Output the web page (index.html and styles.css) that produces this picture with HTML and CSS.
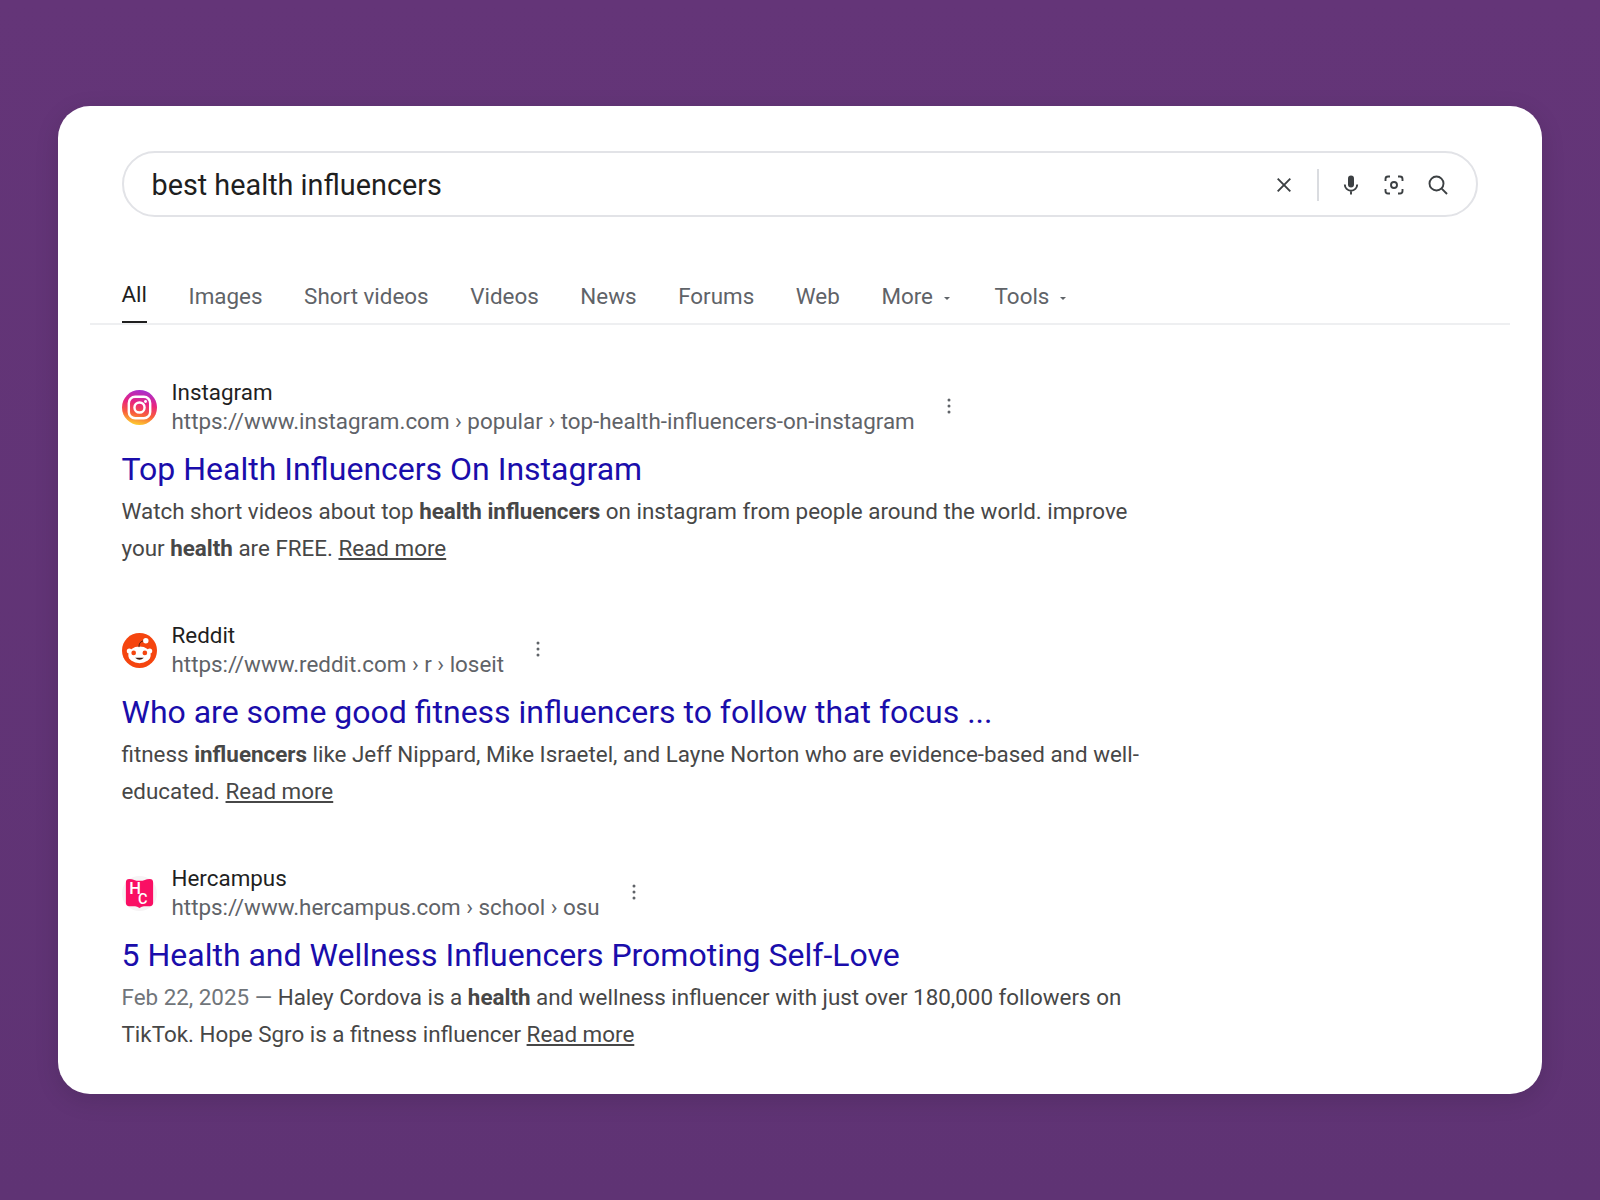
FILE: index.html
```html
<!DOCTYPE html>
<html lang="en">
<head>
  <meta charset="UTF-8" />
  <title>best health influencers</title>
  <link rel="stylesheet" href="styles.css">
</head>
<body>
  <div class="card">
    <div class="search-bar">
      <span class="query">best health influencers</span>
      <svg class="icon icon-clear" viewBox="0 0 24 24"><path d="M5.700 5.700l12.600 12.600M18.300 5.700L5.700 18.300" /></svg>
      <span class="search-divider"></span>
      <svg class="icon icon-mic" viewBox="0 0 24 24">
        <rect class="fill" x="9" y="2.500" width="6" height="12" rx="3" />
        <path d="M5.800 11.500a6.200 6.200 0 0 0 12.400 0M12 17.700v3.800" />
      </svg>
      <svg class="icon icon-lens" viewBox="0 0 24 24">
        <path d="M3.500 8V6a2.500 2.500 0 0 1 2.500-2.500h2M16 3.500h2A2.500 2.500 0 0 1 20.500 6v2M20.500 16v2a2.500 2.500 0 0 1-2.500 2.500h-2M8 20.500H6A2.500 2.500 0 0 1 3.500 18v-2" />
        <circle cx="12" cy="12" r="3" />
      </svg>
      <svg class="icon icon-search" viewBox="0 0 24 24">
        <circle cx="10.500" cy="10.500" r="7" />
        <path d="M15.700 15.700L21 21" />
      </svg>
    </div>

    <div class="tabs">
      <a class="tab active">All</a>
      <a class="tab">Images</a>
      <a class="tab">Short videos</a>
      <a class="tab">Videos</a>
      <a class="tab">News</a>
      <a class="tab">Forums</a>
      <a class="tab">Web</a>
      <a class="tab tab-more">More<span class="caret"></span></a>
      <a class="tab">Tools<span class="caret"></span></a>
    </div>

    <div class="results">
      <div class="result">
        <div class="source">
          <svg class="favicon" viewBox="0 0 36 36">
            <defs>
              <linearGradient id="igGrad" x1="0.4" y1="1" x2="0.6" y2="0">
                <stop offset="0" stop-color="#fdd030" />
                <stop offset="0.3" stop-color="#f9603a" />
                <stop offset="0.62" stop-color="#e9247f" />
                <stop offset="1" stop-color="#a52fd2" />
              </linearGradient>
            </defs>
            <circle cx="18" cy="18" r="18" fill="url(#igGrad)" />
            <rect x="7" y="7" width="22" height="22" rx="6.500" fill="none" stroke="#fff" stroke-width="2.500" />
            <circle cx="18" cy="18" r="5.200" fill="none" stroke="#fff" stroke-width="2.500" />
            <circle cx="24.200" cy="11.800" r="1.500" fill="#fff" />
          </svg>
          <div class="source-text">
            <div class="site-name">Instagram</div>
            <div class="site-url">https://www.instagram.com › popular › top-health-influencers-on-instagram</div>
          </div>
          <svg class="dots" viewBox="0 0 4 16"><circle cx="2" cy="2" r="1.500" /><circle cx="2" cy="8" r="1.500" /><circle cx="2" cy="14" r="1.500" /></svg>
        </div>
        <a class="title">Top Health Influencers On Instagram</a>
        <p class="snippet">Watch short videos about top <b>health influencers</b> on instagram from people around the world. improve your <b>health</b> are FREE. <u>Read more</u></p>
      </div>

      <div class="result">
        <div class="source">
          <svg class="favicon" viewBox="0 0 36 36">
            <circle cx="18" cy="18" r="18" fill="#f5450f" />
            <circle cx="7.500" cy="18.500" r="2.600" fill="#fff" />
            <circle cx="28.500" cy="18.500" r="2.600" fill="#fff" />
            <ellipse cx="18" cy="22.500" rx="11.500" ry="8.500" fill="#fff" />
            <path d="M17.500 14.500c0-4 1.500-6.500 6.500-6.500" fill="none" stroke="#3a1a10" stroke-width="1" />
            <circle cx="24.500" cy="8" r="2.800" fill="#fff" />
            <circle cx="12" cy="20.500" r="2.400" fill="#f5450f" />
            <circle cx="23.500" cy="20.500" r="2.400" fill="#f5450f" />
            <path d="M13.500 25.500q4.500 4 9 0z" fill="#3a1a10" />
          </svg>
          <div class="source-text">
            <div class="site-name">Reddit</div>
            <div class="site-url">https://www.reddit.com › r › loseit</div>
          </div>
          <svg class="dots" viewBox="0 0 4 16"><circle cx="2" cy="2" r="1.500" /><circle cx="2" cy="8" r="1.500" /><circle cx="2" cy="14" r="1.500" /></svg>
        </div>
        <a class="title">Who are some good fitness influencers to follow that focus ...</a>
        <p class="snippet">fitness <b>influencers</b> like Jeff Nippard, Mike Israetel, and Layne Norton who are evidence-based and well-educated. <u>Read more</u></p>
      </div>

      <div class="result">
        <div class="source">
          <svg class="favicon" viewBox="0 0 36 36">
            <circle cx="18" cy="18" r="18" fill="#f6f4f5" />
            <path d="M4 6.500a3.500 3.500 0 0 1 3.500-3.500q3 0 5 1t5.500 1 5.500-1 5-1a3.500 3.500 0 0 1 3.500 3.500v21a3.500 3.500 0 0 1-3.500 3.500h-6q-2 0-4.500 2-2.500-2-4.500-2h-6a3.500 3.500 0 0 1-3.500-3.500z" fill="#fa0f64" />
            <text class="hc-letter" x="7.500" y="18">H</text>
            <text class="hc-letter hc-small" x="16.500" y="28.500">C</text>
          </svg>
          <div class="source-text">
            <div class="site-name">Hercampus</div>
            <div class="site-url">https://www.hercampus.com › school › osu</div>
          </div>
          <svg class="dots" viewBox="0 0 4 16"><circle cx="2" cy="2" r="1.500" /><circle cx="2" cy="8" r="1.500" /><circle cx="2" cy="14" r="1.500" /></svg>
        </div>
        <a class="title">5 Health and Wellness Influencers Promoting Self-Love</a>
        <p class="snippet"><span class="date">Feb 22, 2025 — </span>Haley Cordova is a <b>health</b> and wellness influencer with just over 180,000 followers on TikTok. Hope Sgro is a fitness influencer <u>Read more</u></p>
      </div>
    </div>
  </div>
</body>
</html>
```

FILE: styles.css
```css
* { box-sizing: border-box; }
body {
  margin: 0;
  height: 1200px;
  padding: 106px 58px 106px 57.500px;
  background: linear-gradient(#643578, #5f3374);
  font-family: Roboto, "Liberation Sans", sans-serif;
  overflow: hidden;
}
.card {
  height: 988px;
  background-color: #fff;
  border-radius: 32px;
  padding: 45px 32px 0;
  box-shadow: 0 6px 24px rgba(0,0,0,0.12);
}

/* search box */
.search-bar {
  display: flex;
  align-items: center;
  height: 66px;
  margin: 0 32px;
  padding: 2px 26px 0 28px;
  border: 2px solid #e2e3e7;
  border-radius: 33px;
}
.query {
  flex: 1;
  font-size: 28.800px;
  color: #1f1f1f;
}
.icon {
  width: 24px;
  height: 24px;
  fill: none;
  stroke: #3c4043;
  stroke-width: 1.900;
}
.icon .fill { fill: #3c4043; stroke: none; }
.icon-clear { margin-right: 21px; }
.search-divider {
  width: 2px;
  height: 32px;
  background-color: #dadce0;
  margin-right: 20px;
}
.icon-mic { margin-right: 19px; }
.icon-lens { margin-right: 20px; }

/* tabs */
.tabs {
  display: flex;
  gap: 41.600px;
  height: 52px;
  margin-top: 56px;
  padding: 0 32px;
  border-bottom: 2px solid #eeeff1;
}
.tab {
  position: relative;
  font-size: 22.400px;
  line-height: 46px;
  color: #5f6368;
}
.tab.active { color: #1f1f1f; line-height: 42px; }
.tab.active::after {
  content: "";
  position: absolute;
  left: 0;
  right: 0;
  bottom: 0;
  height: 2px;
  background-color: #1f1f1f;
}
.tab-more { margin-right: 3px; }
.caret {
  display: inline-block;
  width: 0;
  height: 0;
  margin-left: 11px;
  vertical-align: middle;
  border-left: 3px solid transparent;
  border-right: 3px solid transparent;
  border-top: 3px solid #5f6368;
}

/* results */
.results { padding: 53px 32px 0; }
.result { width: 1026px; margin-bottom: 54px; }
.source {
  display: flex;
  align-items: center;
  gap: 15px;
}
.favicon { width: 35px; height: 35px; flex: none; margin-top: 1px; }
.hc-letter { font-size: 17px; font-weight: 500; fill: #fff; }
.hc-small { font-size: 15px; }
.site-name {
  font-size: 22.400px;
  line-height: 29px;
  color: #1f1f1f;
}
.site-url {
  font-size: 22.400px;
  line-height: 29px;
  color: #5f6368;
}
.dots {
  width: 4px;
  height: 16px;
  margin: -3px 0 0 17px;
  fill: #5f6368;
}
.title {
  display: block;
  margin-top: 13px;
  font-size: 32px;
  line-height: 40px;
  color: #1a0dab;
}
.snippet {
  margin: 4px 0 0;
  font-size: 22.400px;
  line-height: 37px;
  color: #474747;
}
.snippet b { font-weight: 700; }
.date { color: #70757a; }
```
